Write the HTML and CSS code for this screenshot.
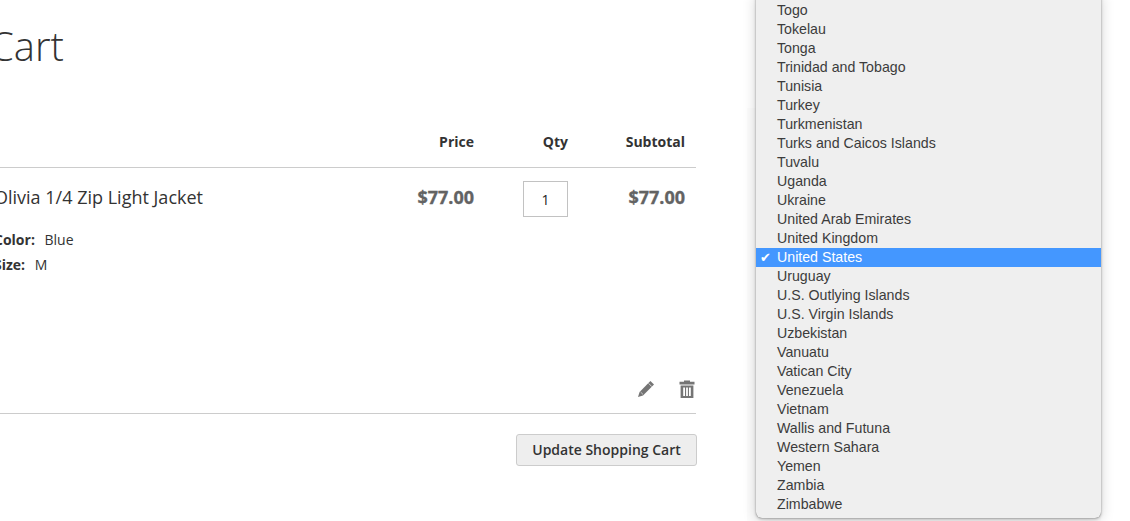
FILE: index.html
```html
<!DOCTYPE html>
<html lang="en">
<head>
  <meta charset="UTF-8" />
  <title>Shopping Cart</title>
  <link rel="stylesheet" href="styles.css">
</head>
<body>

  <div class="cart">
    <h1>Cart</h1>

    <div class="cart-head">
      <span class="col-price">Price</span>
      <span class="col-qty">Qty</span>
      <span class="col-sub">Subtotal</span>
    </div>

    <div class="cart-item">
      <div class="item-info">
        <div class="item-name">Olivia 1/4 Zip Light Jacket</div>
        <div class="item-opt"><strong>Color:</strong> Blue</div>
        <div class="item-opt"><strong>Size:</strong> M</div>
      </div>
      <span class="col-price money">$77.00</span>
      <span class="col-qty"><span class="qty-box">1</span></span>
      <span class="col-sub money">$77.00</span>
    </div>

    <div class="item-actions">
      <svg class="icon-edit" width="18" height="18" viewBox="0 0 18 18">
        <path d="M13.4 1 17 4.6 6 15.4 1 17 2.6 12Z" fill="#757575"/>
        <path d="M11.6 3.4 14.8 6.6" stroke="#fff" stroke-width="0.7"/>
        <path d="M3.6 12 6 14.4" stroke="#fff" stroke-width="0.6"/>
      </svg>
      <svg class="icon-trash" width="16" height="18" viewBox="0 0 16 18">
        <path d="M5 1.8V.4h6V1.8H15.5V4.4H.5V1.8Z" fill="#757575"/>
        <path d="M1.6 5.4H14.4V18H1.6ZM4.2 7.4V16H6V7.4ZM7.1 7.4V16H8.9V7.4ZM10 7.4V16H11.8V7.4Z" fill="#757575" fill-rule="evenodd"/>
      </svg>
    </div>

    <div class="cart-foot">
      <button class="update-btn">Update Shopping Cart</button>
    </div>
  </div>

  <div class="menu-backdrop"></div>

  <ul class="country-menu">
    <li>Togo</li>
    <li>Tokelau</li>
    <li>Tonga</li>
    <li>Trinidad and Tobago</li>
    <li>Tunisia</li>
    <li>Turkey</li>
    <li>Turkmenistan</li>
    <li>Turks and Caicos Islands</li>
    <li>Tuvalu</li>
    <li>Uganda</li>
    <li>Ukraine</li>
    <li>United Arab Emirates</li>
    <li>United Kingdom</li>
    <li class="selected">United States</li>
    <li>Uruguay</li>
    <li>U.S. Outlying Islands</li>
    <li>U.S. Virgin Islands</li>
    <li>Uzbekistan</li>
    <li>Vanuatu</li>
    <li>Vatican City</li>
    <li>Venezuela</li>
    <li>Vietnam</li>
    <li>Wallis and Futuna</li>
    <li>Western Sahara</li>
    <li>Yemen</li>
    <li>Zambia</li>
    <li>Zimbabwe</li>
  </ul>

</body>
</html>
```

FILE: styles.css
```css
html, body {
  margin: 0;
  padding: 0;
  height: 100%;
  overflow: hidden;
  background: #fff;
}
body {
  font-family: 'Open Sans', sans-serif;
  font-size: 14px;
  color: #333;
}
.cart {
  width: 704px;
  margin-left: -8px;
}
h1 {
  font-size: 40px;
  font-weight: 300;
  line-height: 50px;
  margin: 0 0 0 -3px;
  padding-top: 21px;
  height: 100px;
}
.cart-head {
  display: flex;
  justify-content: flex-end;
  font-weight: 700;
  line-height: 20px;
  padding: 11px 11px 15px 0;
  border-bottom: 1px solid #ccc;
  height: 20px;
}
.col-price { width: 100px; text-align: right; }
.col-qty { width: 94px; text-align: right; }
.col-sub { width: 117px; text-align: right; }
.cart-item {
  display: flex;
  align-items: flex-start;
  padding: 13px 11px 0 0;
  height: 190px;
}
.item-info {
  flex: 1;
  padding: 3px 0 0 2px;
}
.item-name {
  font-size: 18px;
  line-height: 27px;
  margin-bottom: 16px;
}
.item-opt {
  line-height: 25px;
}
.item-opt strong {
  margin-right: 6px;
}
.money {
  font-size: 18px;
  font-weight: 700;
  line-height: 27px;
  color: #636363;
  padding-top: 3px;
  -webkit-text-stroke: 0.3px #636363;
}
.qty-box {
  display: inline-block;
  width: 45px;
  height: 36px;
  box-sizing: border-box;
  border: 1px solid #c2c2c2;
  text-align: center;
  color: #222;
  line-height: 35px;
  -webkit-text-stroke: 0;
}
.item-actions {
  display: flex;
  justify-content: flex-end;
  align-items: flex-start;
  gap: 24px;
  padding: 9px 1px 0 0;
  height: 33px;
  border-bottom: 1px solid #ccc;
}
.cart-foot {
  display: flex;
  justify-content: flex-end;
  padding-top: 20px;
  margin-right: -1px;
}
.update-btn {
  font-family: 'Open Sans', sans-serif;
  font-size: 14px;
  font-weight: 600;
  color: #333;
  background: #eee;
  border: 1px solid #ccc;
  border-radius: 3px;
  height: 32px;
  width: 181px;
  padding: 0 0 2px;
}
.menu-backdrop {
  position: absolute;
  left: 747px;
  top: 108px;
  width: 354px;
  bottom: 0;
  background: #fcfcfc;
}
.country-menu {
  position: absolute;
  left: 756px;
  top: -6px;
  width: 345px;
  height: 524px;
  box-sizing: border-box;
  margin: 0;
  padding: 7px 0 0;
  list-style: none;
  background: #efefef;
  border-radius: 0 0 6px 6px;
  box-shadow: 0 0 1px rgba(0,0,0,0.5), 0 1px 3px rgba(0,0,0,0.25), 0 2px 14px rgba(0,0,0,0.18);
  font-family: 'Liberation Sans', sans-serif;
  font-size: 14.2px;
  color: #3c3c3c;
}
.country-menu li {
  height: 19px;
  line-height: 19px;
  padding-left: 21px;
  position: relative;
}
.country-menu .selected {
  background: #4497ff;
  color: #fff;
}
.country-menu .selected::before {
  content: "✔";
  position: absolute;
  left: 4px;
  font-family: 'DejaVu Sans', sans-serif;
  font-size: 13px;
}
```
